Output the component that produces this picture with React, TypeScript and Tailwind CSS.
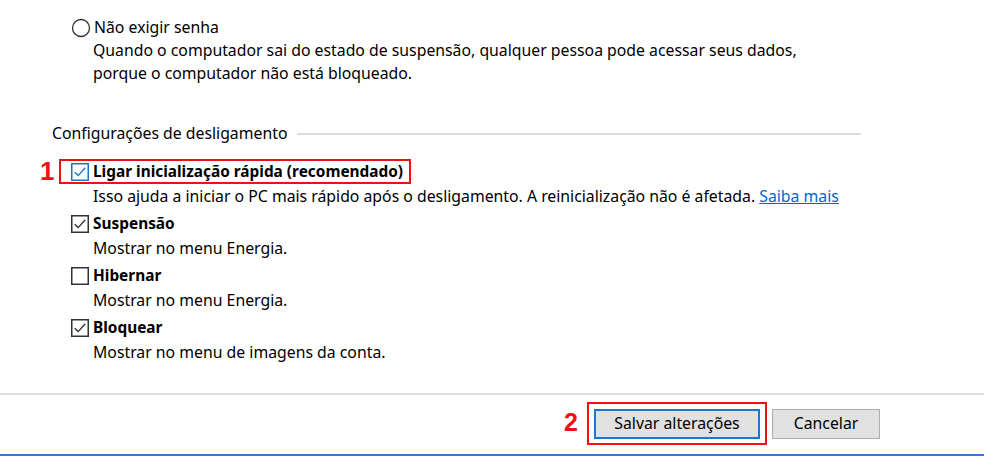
import React from "react";

/* --- ICONS --- */
function Radio() {
    return (
        <svg width="20" height="20" viewBox="0 0 20 20" className="shrink-0">
            <circle cx="10" cy="10" r="8.5" fill="#fff" stroke="#333" strokeWidth="1.3" />
        </svg>
    );
}

function Check({ checked, focus }: { checked: boolean; focus?: boolean }) {
    const c = focus ? "#1e73c8" : "#333";
    return (
        <svg width="18" height="18" viewBox="0 0 18 18" className="shrink-0">
            <rect x="0.75" y="0.75" width="16.5" height="16.5" fill="#fff" stroke={c} strokeWidth="1.5" />
            {checked && <polyline points="3.8,9.2 7.2,12.6 14.2,4.8" fill="none" stroke={c} strokeWidth="1.4" />}
        </svg>
    );
}

const options = [
    { title: "Suspensão", desc: "Mostrar no menu Energia.", checked: true },
    { title: "Hibernar", desc: "Mostrar no menu Energia.", checked: false },
    { title: "Bloquear", desc: "Mostrar no menu de imagens da conta.", checked: true },
];

export default function App() {
    return (
        <div className="w-[984px] h-[456px] bg-white text-black flex flex-col overflow-hidden text-[15.8px] font-['Segoe_UI','Noto_Sans',sans-serif]">
            {/* Sleep password */}
            <div className="pt-4 pl-[71px]">
                <div className="flex items-center gap-[3px] h-[23px]">
                    <Radio />
                    <span>Não exigir senha</span>
                </div>
                <div className="pl-[22px] leading-[23px]">
                    <div>Quando o computador sai do estado de suspensão, qualquer pessoa pode acessar seus dados,</div>
                    <div>porque o computador não está bloqueado.</div>
                </div>
            </div>

            {/* Shutdown settings */}
            <div className="mt-[37px] pl-[52px] pr-[123px] h-6 flex items-center gap-[10px]">
                <span className="whitespace-nowrap">Configurações de desligamento</span>
                <div className="flex-1 h-[2px] bg-[#dcdcdc]" />
            </div>

            <div className="mt-[14px] pl-[71px] flex flex-col">
                <div className="relative h-6 flex items-center gap-[4px]">
                    <Check checked focus />
                    <span className="font-bold text-[15.4px]">Ligar inicialização rápida (recomendado)</span>
                    <div className="absolute -left-[12px] -top-[1px] w-[352px] h-[25px] border-2 border-[#ee1111]" />
                    <span className="absolute -left-[31px] top-[-4px] text-[26px] leading-[30px] font-bold text-[#ee1111] font-['Liberation_Sans',sans-serif]">1</span>
                </div>
                <div className="pl-[22px] h-6 leading-6 whitespace-nowrap">
                    Isso ajuda a iniciar o PC mais rápido após o desligamento. A reinicialização não é afetada.{" "}
                    <a className="text-[#0066cc] underline">Saiba mais</a>
                </div>

                {options.map(o => (
                    <div key={o.title} className="mt-1">
                        <div className="h-6 flex items-center gap-[4px]">
                            <Check checked={o.checked} />
                            <span className="font-bold text-[15.4px]">{o.title}</span>
                        </div>
                        <div className="pl-[22px] h-6 leading-6">{o.desc}</div>
                    </div>
                ))}
            </div>

            <div className="mt-[29px] h-[2px] bg-[#dedede]" />

            {/* Buttons */}
            <div className="flex-1 flex justify-end items-start pt-[14px] pr-[104px] gap-[12px]">
                <div className="relative">
                    <button className="w-[166px] h-[30px] bg-[#e1e1e1] border-2 border-[#1979d2] leading-none">Salvar alterações</button>
                    <div className="absolute -left-[7px] -top-[7px] w-[180px] h-[43px] border-2 border-[#ee1111]" />
                    <span className="absolute -left-[30px] top-[-2px] text-[25px] leading-[30px] font-bold text-[#ee1111] font-['Liberation_Sans',sans-serif]">2</span>
                </div>
                <button className="w-[108px] h-[30px] bg-[#e1e1e1] border border-[#adadad] leading-none">Cancelar</button>
            </div>

            <div className="h-[2px] bg-[#2b7cd3]" />
        </div>
    );
}
